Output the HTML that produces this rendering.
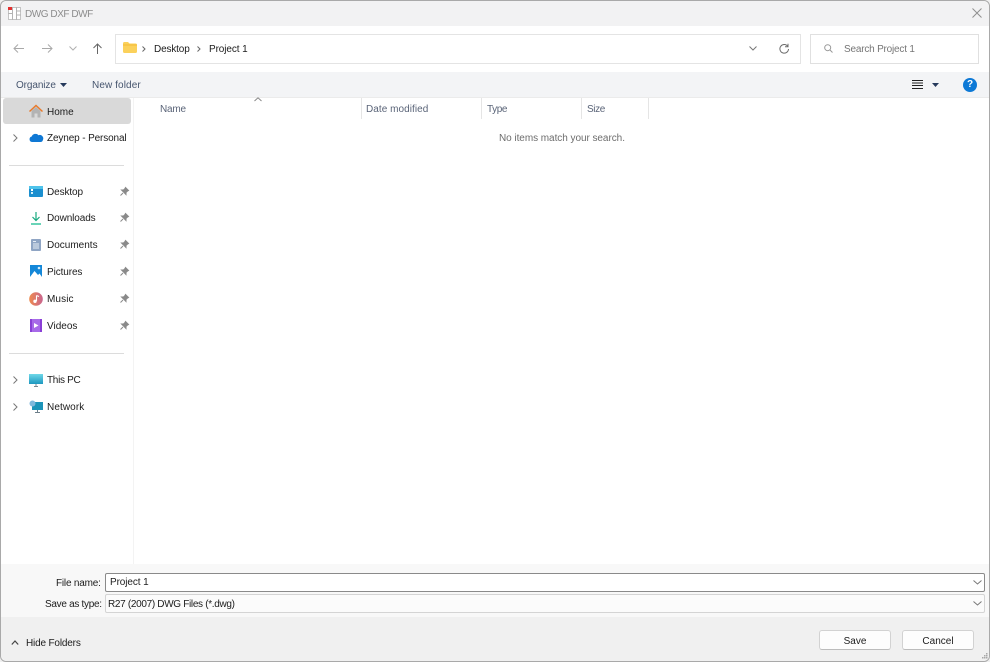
<!DOCTYPE html>
<html><head><meta charset="utf-8"><style>
html,body{margin:0;padding:0;width:990px;height:662px;overflow:hidden;background:#f0f0f0}
body{font-family:"Liberation Sans",sans-serif;font-size:10px;color:#1c1c1c}
#root{position:absolute;left:0;top:0;width:990px;height:662px;filter:blur(.3px)}
.a{position:absolute}
.t{position:absolute;white-space:nowrap;line-height:20px;margin-top:2px;z-index:2}
svg{position:absolute;overflow:visible}
#win{position:absolute;left:0;top:0;width:988px;height:660px;border:1px solid #a9a9a9;border-radius:6px;overflow:hidden;background:#fff}
.hd{color:#5a6478}
.pin{fill:#8a8a8a}
.sep{position:absolute;top:98px;width:1px;height:21px;background:#e5e5e5}
.chev{fill:none;stroke:#777;stroke-width:1}
.btn{position:absolute;top:630px;height:18px;width:70px;background:#fdfdfd;border:1px solid #d2d2d2;border-bottom-color:#bcbcbc;border-radius:3px;text-align:center;line-height:21px}
</style></head><body><div id="root">
<div id="win"></div>
<div class="a" style="left:1px;top:1px;width:988px;height:25px;background:#f2f2f3;border-radius:6px 6px 0 0"></div>
<div class="a" style="left:1px;top:72px;width:988px;height:25px;background:#f3f4f6"></div>
<div class="a" style="left:1px;top:97px;width:988px;height:1px;background:#ebebeb"></div>
<div class="a" style="left:1px;top:564px;width:988px;height:97px;background:#f0f0f0;border-radius:0 0 6px 6px"></div>
<div class="a" style="left:1px;top:564px;width:988px;height:53px;background:#f8f8f8"></div>
<div class="a" style="left:133px;top:98px;width:1px;height:466px;background:#f3f3f3"></div>

<!-- title -->
<svg style="left:8px;top:7px" width="13" height="13" viewBox="0 0 13 13"><rect x="0.5" y="0.5" width="12" height="12" fill="#fff" stroke="#c4c4c4"/><rect x="0" y="0" width="4" height="3" fill="#e23030"/><path d="M4.500 0v13M8.500 0v13M0 6.500h4M9 4h4M9 8h4" stroke="#b4b4b4" fill="none"/></svg>
<div class="t" style="left:25px;top:3px;color:#8c8c8c;letter-spacing:-.45px">DWG DXF DWF</div>
<svg style="left:972px;top:8px" width="10" height="10"><path d="M.5 .5l9 9M9.500 .5l-9 9" stroke="#8f8f8f" fill="none"/></svg>

<!-- nav -->
<svg style="left:13px;top:43px" width="11" height="11"><path d="M11 5.500H1M5 1.500L1 5.500L5 9.500" stroke="#a9a9a9" fill="none"/></svg>
<svg style="left:42px;top:43px" width="11" height="11"><path d="M0 5.500H10M6 1.500L10 5.500L6 9.500" stroke="#a9a9a9" fill="none"/></svg>
<svg style="left:69px;top:46px" width="8" height="5"><path d="M.5 .5L4 4L7.500 .5" stroke="#b0b0b0" fill="none"/></svg>
<svg style="left:92px;top:43px" width="11" height="11"><path d="M5.500 11V1M1.500 5L5.500 1L9.500 5" stroke="#666" fill="none"/></svg>

<!-- address -->
<div class="a" style="left:115px;top:34px;width:684px;height:28px;border:1px solid #e4e4e4;background:#fff"></div>
<svg style="left:123px;top:42px" width="14" height="11"><path d="M0 1.500Q0 0 1.500 0H5L6.500 1.500H12.500Q14 1.500 14 3V9.500Q14 11 12.500 11H1.500Q0 11 0 9.500Z" fill="#fbd15b"/><path d="M0 3H14" stroke="#f0b429" stroke-width=".7"/></svg>
<svg style="left:142px;top:46px" width="4" height="6"><path class="chev" style="stroke:#666" d="M.5 .5L3 3L.5 5.500"/></svg>
<div class="t" style="left:154px;top:38px;letter-spacing:-.15px">Desktop</div>
<svg style="left:197px;top:46px" width="4" height="6"><path class="chev" style="stroke:#666" d="M.5 .5L3 3L.5 5.500"/></svg>
<div class="t" style="left:209px;top:38px;letter-spacing:-.1px">Project 1</div>
<svg style="left:749px;top:46px" width="8" height="5"><path class="chev" d="M.5 .5L4 4L7.500 .5"/></svg>
<svg style="left:779px;top:43px" width="10" height="11" viewBox="0 0 10 11"><path d="M8.800 3.500A4.300 4.300 0 1 0 9.500 6" stroke="#6c6c6c" fill="none"/><path d="M9 .8V3.800H6" stroke="#6c6c6c" fill="none"/></svg>

<!-- search -->
<div class="a" style="left:810px;top:34px;width:167px;height:28px;border:1px solid #e0e0e0;background:#fff"></div>
<svg style="left:824px;top:44px" width="9" height="9"><circle cx="3.700" cy="3.700" r="3" stroke="#999" fill="none"/><path d="M6 6L8.500 8.500" stroke="#999" fill="none"/></svg>
<div class="t" style="left:844px;top:38px;color:#767676;letter-spacing:-.2px">Search Project 1</div>

<!-- toolbar -->
<div class="t hd" style="left:16px;top:74px;color:#46556e;letter-spacing:-.1px">Organize</div>
<svg style="left:60px;top:83px" width="7" height="4"><path d="M0 0H7L3.500 4Z" fill="#263a5c"/></svg>
<div class="t hd" style="left:92px;top:74px;color:#46556e;letter-spacing:.1px">New folder</div>
<svg style="left:912px;top:80px" width="11" height="9"><path d="M0 .5H11M0 3H11M0 5.500H11M0 8.500H11" stroke="#222" stroke-width="1.100" fill="none"/></svg>
<svg style="left:932px;top:83px" width="7" height="4"><path d="M0 0H7L3.500 4Z" fill="#263a5c"/></svg>
<div class="a" style="left:963px;top:78px;width:14px;height:14px;border-radius:50%;background:#0d79d6;color:#fff;font-weight:bold;text-align:center;line-height:14px;font-size:10px">?</div>

<!-- sidebar -->
<div class="a" style="left:3px;top:98px;width:128px;height:26px;background:#d9d9d9;border-radius:3px"></div>
<svg style="left:29px;top:104px" width="14" height="14" viewBox="0 0 14 14"><path d="M2.500 7V13.500H5.500V9.500H8.500V13.500H11.500V7L7 3Z" fill="#b3b3b3"/><path d="M.5 7.500L7 1.500L13.500 7.500" stroke="#e8792a" stroke-width="1.500" fill="none"/></svg>
<div class="t" style="left:47px;top:101px">Home</div>

<svg style="left:13px;top:134px" width="5" height="8"><path class="chev" d="M.5 .5L4 4L.5 7.500"/></svg>
<svg style="left:29px;top:133px" width="14" height="9" viewBox="0 0 14 9"><path d="M3 9A2.800 2.800 0 0 1 2.700 3.500A4 4 0 0 1 9.500 2.200A3.500 3.500 0 0 1 13.900 7Q13.500 9 11.500 9Z" fill="#0f78d4"/></svg>
<div class="t" style="left:47px;top:127px;letter-spacing:-.13px">Zeynep - Personal</div>
<div class="a" style="left:9px;top:165px;width:115px;height:1px;background:#dcdcdc"></div>

<svg style="left:29px;top:186px" width="14" height="11"><rect width="14" height="11" rx="1" fill="#1b8fcf"/><rect x="0" y="0" width="14" height="3" fill="#4fc3ea"/><rect x="2" y="3" width="2" height="2" fill="#fff"/><rect x="2" y="6" width="2" height="2" fill="#cfeffa"/></svg>
<div class="t" style="left:47px;top:181px;letter-spacing:-.1px">Desktop</div>
<svg style="left:31px;top:212px" width="10" height="13"><path d="M5 0V8.500M1.500 5L5 8.500L8.500 5" stroke="#18a97f" stroke-width="1.200" fill="none"/><path d="M0 12H10" stroke="#2ac29a" stroke-width="1.400"/></svg>
<div class="t" style="left:47px;top:207px;letter-spacing:-.1px">Downloads</div>
<svg style="left:31px;top:239px" width="10" height="12"><rect width="10" height="12" rx="1" fill="#8fa5c4"/><path d="M2 2.500H5M2 5H8M2 7H8M2 9H8" stroke="#e6edf5" fill="none"/></svg>
<div class="t" style="left:47px;top:234px">Documents</div>
<svg style="left:30px;top:265px" width="12" height="12"><rect width="12" height="12" fill="#1487d8"/><path d="M0 12L4.500 6L8 10L9.500 8.500L12 12Z" fill="#fff"/><circle cx="9" cy="3" r="1.300" fill="#d4ecfb"/></svg>
<div class="t" style="left:47px;top:261px;letter-spacing:-.1px">Pictures</div>
<svg style="left:29px;top:292px" width="14" height="14"><defs><linearGradient id="m" x1="0" x2="1"><stop offset="0" stop-color="#ee8a4e"/><stop offset="1" stop-color="#c9658f"/></linearGradient></defs><circle cx="7" cy="7" r="6.800" fill="url(#m)"/><path d="M7.500 3.500V9" stroke="#fff" stroke-width="1.100" fill="none"/><path d="M7.500 3.500L10 4.500" stroke="#fff" fill="none"/><circle cx="6" cy="9.300" r="1.700" fill="#fff"/></svg>
<div class="t" style="left:47px;top:288px;letter-spacing:.1px">Music</div>
<svg style="left:30px;top:319px" width="12" height="13"><rect width="12" height="13" fill="#8a3fd6"/><rect x="2" y="0" width="8" height="13" fill="#a76ae8"/><path d="M4 4L8.500 6.500L4 9Z" fill="#fff"/></svg>
<div class="t" style="left:47px;top:315px">Videos</div>

<svg style="left:120px;top:187px" width="9" height="9" viewBox="0 0 9 9"><path class="pin" d="M5.500 .5L8.500 3.500L7.500 4L6 5.500L6 7.500L1.500 3L3.500 3L5 1.500ZM3 6L.5 8.500" stroke="#8a8a8a"/></svg>
<svg style="left:120px;top:213px" width="9" height="9" viewBox="0 0 9 9"><path class="pin" d="M5.500 .5L8.500 3.500L7.500 4L6 5.500L6 7.500L1.500 3L3.500 3L5 1.500ZM3 6L.5 8.500" stroke="#8a8a8a"/></svg>
<svg style="left:120px;top:240px" width="9" height="9" viewBox="0 0 9 9"><path class="pin" d="M5.500 .5L8.500 3.500L7.500 4L6 5.500L6 7.500L1.500 3L3.500 3L5 1.500ZM3 6L.5 8.500" stroke="#8a8a8a"/></svg>
<svg style="left:120px;top:267px" width="9" height="9" viewBox="0 0 9 9"><path class="pin" d="M5.500 .5L8.500 3.500L7.500 4L6 5.500L6 7.500L1.500 3L3.500 3L5 1.500ZM3 6L.5 8.500" stroke="#8a8a8a"/></svg>
<svg style="left:120px;top:294px" width="9" height="9" viewBox="0 0 9 9"><path class="pin" d="M5.500 .5L8.500 3.500L7.500 4L6 5.500L6 7.500L1.500 3L3.500 3L5 1.500ZM3 6L.5 8.500" stroke="#8a8a8a"/></svg>
<svg style="left:120px;top:321px" width="9" height="9" viewBox="0 0 9 9"><path class="pin" d="M5.500 .5L8.500 3.500L7.500 4L6 5.500L6 7.500L1.500 3L3.500 3L5 1.500ZM3 6L.5 8.500" stroke="#8a8a8a"/></svg>

<div class="a" style="left:9px;top:353px;width:115px;height:1px;background:#dcdcdc"></div>
<svg style="left:13px;top:376px" width="5" height="8"><path class="chev" d="M.5 .5L4 4L.5 7.500"/></svg>
<svg style="left:29px;top:374px" width="14" height="13"><defs><linearGradient id="p" x1="0" x2="0" y1="0" y2="1"><stop offset="0" stop-color="#6fd8e8"/><stop offset="1" stop-color="#1e98c0"/></linearGradient></defs><rect width="14" height="10" fill="url(#p)"/><path d="M5 12.500H9M7 10V12" stroke="#7b8a94" fill="none"/></svg>
<div class="t" style="left:47px;top:369px;letter-spacing:-.3px">This PC</div>
<svg style="left:13px;top:403px" width="5" height="8"><path class="chev" d="M.5 .5L4 4L.5 7.500"/></svg>
<svg style="left:29px;top:400px" width="14" height="14"><rect x="3" y="2" width="11" height="8" fill="#1c93b8"/><circle cx="3.500" cy="3.500" r="3" fill="#7fb8dc"/><path d="M6 12.500H11M8.500 10V12" stroke="#6e7f8a" fill="none"/></svg>
<div class="t" style="left:47px;top:396px;letter-spacing:.1px">Network</div>

<!-- column headers -->
<svg style="left:254px;top:97px" width="8" height="5"><path d="M.5 4L4 .8L7.500 4" stroke="#888" fill="none"/></svg>
<div class="t hd" style="left:160px;top:98px;letter-spacing:-.2px">Name</div>
<div class="sep" style="left:361px"></div>
<div class="t hd" style="left:366px;top:98px;letter-spacing:.05px">Date modified</div>
<div class="sep" style="left:481px"></div>
<div class="t hd" style="left:487px;top:98px;letter-spacing:-.4px">Type</div>
<div class="sep" style="left:581px"></div>
<div class="t hd" style="left:587px;top:98px;letter-spacing:-.4px">Size</div>
<div class="sep" style="left:648px"></div>
<div class="t" style="left:499px;top:127px;color:#6d6d6d;letter-spacing:-.05px">No items match your search.</div>

<!-- bottom fields -->
<div class="t" style="left:56px;top:572px;letter-spacing:-.2px">File name:</div>
<div class="a" style="left:105px;top:573px;width:878px;height:17px;background:#fff;border:1px solid #8a8a8a;border-radius:2px"></div>
<div class="t" style="left:110px;top:571px;letter-spacing:-.1px">Project 1</div>
<svg style="left:973px;top:580px" width="9" height="5"><path class="chev" d="M.5 .5L4.500 4L8.500 .5"/></svg>
<div class="t" style="left:45px;top:593px;letter-spacing:-.3px">Save as type:</div>
<div class="a" style="left:105px;top:594px;width:878px;height:17px;background:#fbfbfb;border:1px solid #d4d4d4;border-radius:2px"></div>
<div class="t" style="left:108px;top:593px;letter-spacing:-.32px">R27 (2007) DWG Files (*.dwg)</div>
<svg style="left:973px;top:601px" width="9" height="5"><path class="chev" d="M.5 .5L4.500 4L8.500 .5"/></svg>

<!-- footer -->
<svg style="left:11px;top:640px" width="8" height="5"><path d="M.8 4.500L4 1L7.200 4.500" stroke="#444" stroke-width="1.200" fill="none"/></svg>
<div class="t" style="left:26px;top:632px;letter-spacing:-.17px">Hide Folders</div>
<div class="btn" style="left:819px">Save</div>
<div class="btn" style="left:902px">Cancel</div>
<svg style="left:981px;top:653px" width="7" height="7"><path d="M5 0h1.500v1.500H5zM3 2h1.500v1.500H3zM5 2h1.500v1.500H5zM1 4h1.500v1.500H1zM3 4h1.500v1.500H3zM5 4h1.500v1.500H5z" fill="#a8a8a8"/></svg>
</div></body></html>
